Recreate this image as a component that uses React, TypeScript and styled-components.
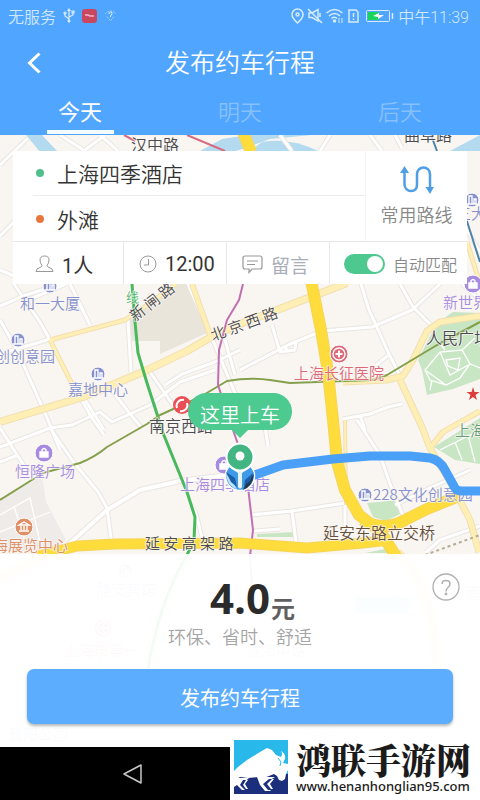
import React, { useState } from "react";
import styled, { createGlobalStyle } from "styled-components";

const GlobalStyle = createGlobalStyle`
  *, *::before, *::after { box-sizing: border-box; }
  body {
    margin: 0;
    background: #fff;
    font-family: Roboto, "Noto Sans CJK SC", sans-serif;
    color: #333;
  }
  button { font: inherit; color: inherit; border: 0; background: none; padding: 0; cursor: pointer; }
`;

const Screen = styled.div`
  display: flex;
  flex-direction: column;
  min-height: 100vh;
  overflow: hidden;
`;

/* ---------- header ---------- */

const Header = styled.header`
  background: #50a5ff;
  color: #fff;
`;

const StatusBar = styled.div`
  display: flex;
  align-items: center;
  justify-content: space-between;
  height: 31px;
  padding: 0 11px 0 8px;
  font-size: 16px;
  font-weight: 350;
  color: #cfe8ff;
`;

const StatusGroup = styled.div<{ $gap: number }>`
  display: flex;
  align-items: center;
  gap: ${(p) => p.$gap}px;
`;

const TitleBar = styled.div`
  display: grid;
  grid-template-columns: 68px 1fr 68px;
  align-items: center;
  height: 63px;
`;

const BackButton = styled.button`
  display: grid;
  place-items: center;
  height: 100%;
`;

const Title = styled.h1`
  margin: 0;
  padding-top: 2px;
  text-align: center;
  font-size: 25px;
  line-height: 32px;
  font-weight: 350;
`;

const Tabs = styled.nav`
  display: grid;
  grid-template-columns: repeat(3, 1fr);
  height: 41px;
`;

const Tab = styled.button<{ $active: boolean }>`
  justify-self: center;
  width: 67px;
  height: 40px;
  padding-top: 2px;
  font-size: 22px;
  line-height: 34px;
  font-weight: ${(p) => (p.$active ? 400 : 350)};
  color: ${(p) => (p.$active ? "#fff" : "#86c0ff")};
  border-bottom: 4px solid ${(p) => (p.$active ? "#f2fbff" : "transparent")};
`;

/* ---------- map ---------- */

const MapArea = styled.main`
  position: relative;
  flex: 1;
  display: flex;
  flex-direction: column;
  justify-content: space-between;
  min-height: 612px;
  overflow: hidden;
  background: #f9f6f2;
`;

const MapCanvas = styled.svg`
  position: absolute;
  inset: 0;
  width: 100%;
  height: 100%;
`;

const MapText = styled.text<{ $size: number }>`
  font-family: "Noto Sans CJK SC", sans-serif;
  font-size: ${(p) => p.$size}px;
  font-weight: 350;
  paint-order: stroke;
  stroke: rgba(251, 248, 245, 0.7);
  stroke-width: 2px;
  stroke-linejoin: round;
`;

const PickupMarker = styled.div`
  position: absolute;
  top: 258px;
  left: 50%;
  transform: translateX(-50%);
  display: flex;
  flex-direction: column;
  align-items: center;
`;

const Bubble = styled.div`
  padding: 0 12px;
  height: 37px;
  border-radius: 19px;
  background: #4dca90;
  color: #fff;
  font-size: 20px;
  line-height: 46px;
  font-weight: 350;
  white-space: nowrap;
`;

/* ---------- trip card ---------- */

const TripCard = styled.section`
  position: relative;
  margin: 16px 13px 0;
  background: #fff;
`;

const TripTop = styled.div`
  display: grid;
  grid-template-columns: 1fr 102px;
  height: 90px;
`;

const Places = styled.div`
  display: grid;
  grid-template-rows: 1fr 1fr;
  padding-left: 20px;
`;

const PlaceButton = styled.button<{ $divided?: boolean }>`
  display: flex;
  align-items: center;
  gap: 13px;
  padding-left: 3px;
  font-size: 21px;
  font-weight: 350;
  text-align: left;
  border-bottom: ${(p) => (p.$divided ? "1px solid #ececec" : "0")};
`;

const Dot = styled.span<{ $color: string }>`
  width: 8px;
  height: 8px;
  border-radius: 50%;
  background: ${(p) => p.$color};
`;

const RoutesButton = styled.button`
  display: flex;
  flex-direction: column;
  align-items: center;
  gap: 9px;
  padding-top: 14px;
  border-left: 1px solid #f4f4f4;
  font-size: 18px;
  line-height: 24px;
  font-weight: 350;
  color: #888;
`;

const Options = styled.div`
  display: grid;
  grid-template-columns: 111fr 103fr 103fr 137fr;
  height: 43px;
  border-top: 1px solid #e8e8e8;
`;

const OptionButton = styled.button<{ $muted?: boolean; $size: number }>`
  display: flex;
  align-items: center;
  gap: 8px;
  padding: 2px 0 0 15px;
  border-right: 1px solid #e8e8e8;
  font-size: ${(p) => p.$size}px;
  color: ${(p) => (p.$muted ? "#aaaeb8" : "#333")};

  &:first-child { padding-left: 22px; }
`;

const SwitchLabel = styled.label`
  display: flex;
  align-items: center;
  justify-content: flex-end;
  gap: 8px;
  padding: 2px 10px 0 0;
  font-size: 16px;
  font-weight: 350;
  color: #888;
  white-space: nowrap;
`;

const SwitchInput = styled.input`
  appearance: none;
  display: flex;
  align-items: center;
  justify-content: flex-start;
  width: 41px;
  height: 20px;
  margin: 0;
  padding: 0 2px;
  border-radius: 10px;
  background: #ccc;

  &::before {
    content: "";
    width: 16px;
    height: 16px;
    border-radius: 50%;
    background: #fff;
  }
  &:checked { background: #4dc88e; justify-content: flex-end; }
`;

/* ---------- price panel ---------- */

const PricePanel = styled.section`
  position: relative;
  display: flex;
  flex-direction: column;
  height: 193px;
  padding: 19px 27px 23px;
  background: rgba(255, 255, 255, 0.94);
`;

const PriceRow = styled.div`
  display: grid;
  grid-template-columns: 1fr auto 1fr;
  align-items: start;
  height: 53px;
  margin: 0 -7px;
`;

const Price = styled.strong`
  grid-column: 2;
  font-family: "Open Sans", "Noto Sans", sans-serif;
  font-size: 42px;
  line-height: 50px;
  font-weight: 700;
  color: #2b2b2b;
`;

const PriceAside = styled.div`
  display: flex;
  justify-content: space-between;
  align-items: flex-start;
`;

const Unit = styled.span`
  padding: 23px 0 0 1px;
  font-family: "Noto Sans CJK SC", sans-serif;
  font-size: 24px;
  line-height: 24px;
  font-weight: 700;
  color: #606060;
`;

const HelpButton = styled.button`
  width: 28px;
  height: 28px;
`;

const Slogan = styled.p`
  margin: 0;
  text-align: center;
  font-size: 18px;
  line-height: 24px;
  font-weight: 350;
  color: #a5a5a5;
`;

const PublishButton = styled.button`
  height: 55px;
  margin-top: auto;
  padding-top: 2px;
  border-radius: 7px;
  background: #5dadff;
  color: #fff;
  font-size: 20px;
  box-shadow: 0 2px 3px rgba(90, 100, 90, 0.45);
`;

/* ---------- bottom bar ---------- */

const NavBar = styled.footer`
  display: flex;
  justify-content: space-between;
  align-items: stretch;
  height: 53px;
  background: #000;
`;

const NavBack = styled.button`
  display: grid;
  place-items: center;
  width: 56px;
  margin-left: 105px;
`;

const SiteBadge = styled.a`
  position: relative;
  display: flex;
  gap: 8px;
  width: 250px;
  height: 65px;
  margin-top: -12px;
  padding: 5px 0 0 4px;
  background: #fff;
  color: #1b1b1b;
  text-decoration: none;
`;

const SiteText = styled.span`
  display: flex;
  flex-direction: column;
  white-space: nowrap;
`;

const SiteName = styled.strong`
  font-family: "Noto Serif CJK SC", "Noto Sans CJK SC", serif;
  font-size: 35px;
  line-height: 38px;
  font-weight: 900;
`;

const SiteUrl = styled.span`
  font-family: "Noto Sans", sans-serif;
  font-size: 13px;
  line-height: 16px;
  font-weight: 500;
`;

/* ---------- map data ---------- */

type Road = { d: string; w?: number };

const minorRoads: Road[] = [
  { d: "M0 165 L28 138 M0 236 L14 222 M0 270 L14 276 M60 135 L85 151 M85 150 L105 135 M100 135 L118 151" },
  { d: "M0 306 L26 295 L60 284" },
  { d: "M14 284 L40 322 L50 340 M28 300 L66 284" },
  { d: "M0 354 L50 339" },
  { d: "M0 320 L16 348 L48 420 L60 450" },
  { d: "M70 284 L90 325 M128 320 L131 372" },
  { d: "M70 380 L92 418 L104 435" },
  { d: "M84 398 L104 430 M110 388 L135 420 L142 428" },
  { d: "M0 447 L50 428 L72 425 L100 412 L112 422 L150 405 L180 382 L215 370" },
  { d: "M150 372 L175 408 M165 385 L182 374 L215 362 L240 350" },
  { d: "M0 428 L14 450 L30 475 M0 462 L18 455" },
  { d: "M50 428 L72 460 L98 492 L107 508 L112 545" },
  { d: "M68 545 L107 510 L140 490 L180 481 L235 474", w: 4 },
  { d: "M195 510 L204 545 M188 284 L214 343 L240 405" },
  { d: "M225 340 L235 375 M240 370 L290 344 L322 331 L372 327 L412 310 L440 284" },
  { d: "M272 325 L280 352 L295 350 L296 340 M285 345 L287 352" },
  { d: "M361 284 L369 310 L376 325 L388 352 L400 376" },
  { d: "M400 284 L413 307 L430 324 M376 365 L390 354" },
  { d: "M343 419 L370 414 L388 407 L402 404 M360 415 L365 430" },
  { d: "M357 420 L380 455 L390 484 L405 520" },
  { d: "M250 515 L292 511 L345 503 M292 511 L296 542 M253 531 L280 529" },
  { d: "M264 420 L268 446 M345 500 L345 540" },
  { d: "M395 505 L430 488 L470 470 M425 553 L440 540 L480 526" },
  { d: "M280 135 L292 151 M330 135 L320 151 M370 135 L382 151 M395 135 L402 148" },
  { d: "M467 230 L480 252 M467 205 L480 195 M462 284 L480 300" },
  { d: "M40 600 L90 640 L110 700 M200 640 L330 620 L420 590 M300 740 L470 680" },
];

const paleRoads: Road[] = [
  { d: "M0 422 L83 397 L143 372 L187 351 L213 336 L240 324 L290 305 L347 283", w: 6 },
  { d: "M50 340 L125 320 L150 303 L176 284", w: 3 },
  { d: "M50 340 L60 360 L72 384", w: 3 },
  { d: "M192 284 L210 335", w: 4 },
  { d: "M480 316 L440 322 L427 331 L413 360 L403 376 L387 380 L343 382", w: 5 },
  { d: "M400 380 L422 427 L430 448 L453 487 L470 520 L479 552", w: 5 },
  { d: "M480 411 L443 432 L430 448", w: 4 },
  { d: "M345 420 L346 505", w: 2 },
  { d: "M0 578 L45 555 M397 553 Q437 590 436 670", w: 8 },
  { d: "M467 242 L480 284", w: 3 },
];

const highways: Road[] = [
  { d: "M243 132 L251 152 M311 280 L321 330 L328 372 L334 430 L337 462 L345 490 L359 515 L380 531 L397 558", w: 10 },
  { d: "M38 556 L77 546 L115 544 L240 543 L307 548 L363 543 L390 540", w: 9 },
  { d: "M362 520 Q385 532 405 520 L427 509 L459 496", w: 10 },
];

type Label = { text: string; x: number; y: number; color: string; size?: number; rotate?: number; end?: boolean };

const INK = "#4a4a50";
const BLUE = "#8791cb";
const PURPLE = "#a68be0";

const labels: Label[] = [
  { text: "汉中路", x: 131, y: 151, color: INK, size: 16 },
  { text: "曲阜路", x: 404, y: 141, color: INK, size: 16 },
  { text: "线", x: 126, y: 302, color: "#4fb86c", size: 13 },
  { text: "新 闸 路", x: 135, y: 322, color: INK, size: 15, rotate: -38 },
  { text: "北 京 西 路", x: 213, y: 341, color: INK, size: 15, rotate: -20 },
  { text: "和一大厦", x: 20, y: 309, color: BLUE },
  { text: "创创意园", x: 55, y: 362, color: BLUE, end: true },
  { text: "嘉地中心", x: 68, y: 395, color: BLUE },
  { text: "南京西路", x: 149, y: 432, color: INK, size: 16 },
  { text: "恒隆广场", x: 15, y: 477, color: PURPLE },
  { text: "上海展览中心", x: 68, y: 551, color: "#dd9068", end: true },
  { text: "上海四季酒店", x: 180, y: 490, color: PURPLE },
  { text: "延 安 高 架 路", x: 145, y: 549, color: INK },
  { text: "上海长征医院", x: 294, y: 379, color: "#df6878" },
  { text: "新世界", x: 443, y: 308, color: PURPLE },
  { text: "人民广场", x: 426, y: 344, color: INK, size: 16 },
  { text: "上海", x: 455, y: 436, color: "#6a9c78" },
  { text: "228文化创意园", x: 373, y: 500, color: BLUE },
  { text: "延安东路立交桥", x: 323, y: 539, color: "#66503c", size: 16 },
  { text: "三大", x: 456, y: 219, color: BLUE },
  { text: "静安宾馆", x: 96, y: 595, color: "#b3b9de" },
  { text: "上海市第一", x: 64, y: 656, color: "#ecabb2" },
  { text: "淮海中路", x: 246, y: 656, color: "#cfc8c8" },
  { text: "南京", x: 466, y: 598, color: "#b3b9de" },
  { text: "襄阳公园", x: 8, y: 740, color: "#b3b9de" },
];

const Roads = ({ items, fill, edge }: { items: Road[]; fill: string; edge: string }) => (
  <g fill="none" strokeLinejoin="round">
    {items.map((r) => <path key={"e" + r.d} d={r.d} stroke={edge} strokeWidth={(r.w ?? 3) + 2} />)}
    {items.map((r) => <path key={r.d} d={r.d} stroke={fill} strokeWidth={r.w ?? 3} />)}
  </g>
);

const Poi = ({ x, y, color, kind }: { x: number; y: number; color: string; kind: "office" | "bag" | "museum" | "cross" }) => (
  <g transform={`translate(${x} ${y})`}>
    <circle r={kind === "office" ? 7 : 9} fill={color} stroke="#fff" />
    <g fill="none" stroke="#fff" strokeWidth="1.4">
      {kind === "office" && <path d="M-3 4V-4H0V4M-5 4H5M2 4V-1H4V4" />}
      {kind === "bag" && <><path d="M-4 -1H4V4H-4Z" fill="#fff" /><path d="M-2 -1V-3Q0 -6 2 -3V-1" /></>}
      {kind === "museum" && <path d="M-5 -2L0 -5L5 -2ZM-3 -1V3M0 -1V3M3 -1V3M-5 4H5" />}
      {kind === "cross" && <><circle r="6" /><path d="M-3.5 0H3.5M0 -3.5V3.5" strokeWidth="2" /></>}
    </g>
  </g>
);

const CityMap = () => (
  <MapCanvas viewBox="0 135 480 612" preserveAspectRatio="xMidYMin slice" aria-label="地图">
    <rect y="135" width="480" height="612" fill="#f9f6f2" />
    <g fill="#b4daf0">
      <path d="M26 135H42L58 152H40Z" />
      <path d="M200 151L222 139L248 135H312L270 139L236 151Z" />
      <path d="M250 151L262 142Q290 137 318 151Z" />
      <path d="M450 151L480 135V151Z" />
    </g>
    <path d="M130 318L176 284H192L207 333L160 354V341H130Z" fill="#e9e5db" />
    <path d="M0 500L42 476L46 502L66 540L50 551H0Z" fill="#efebe8" />
    <g fill="#c8e6c4">
      <path d="M437 323L453 312L480 313V379L453 389L427 395L422 370L418 360L428 340Z" />
      <path d="M434 447L480 418V464L455 460Z" />
      <path d="M367 503L399 500L400 514L386 521L373 517Z" />
      <path d="M257 534L295 532V537H257Z" />
      <path d="M365 553L385 549L400 553Z" />
    </g>
    <g fill="none" stroke="#fff" strokeWidth="1.3">
      <path d="M425 370L440 352L462 350L470 364L460 378L446 385L430 380ZM440 352L450 375L470 364M437 340L445 350M425 370L446 385M446 360L460 358L458 370L448 366ZM430 390L432 380M462 350L475 338M470 364L480 368" />
      <path d="M440 450L480 430M455 442L462 460M468 435L475 462M0 515L30 498L42 551M14 506L28 551M0 532L50 512" />
    </g>
    <Roads items={minorRoads} fill="#ffffff" edge="#e9e5e1" />
    <Roads items={paleRoads} fill="#ffefb4" edge="#f1dfb0" />
    <g fill="none" strokeWidth="3" strokeLinejoin="round">
      <path d="M132 284L135 322L138 353L147 383L158 417L163 433L187 492L195 517L194 540L187 555Q160 600 148 668" stroke="#48b95c" />
      <path d="M0 500L43 473L80 463Q95 457 107 447L147 424L160 415L200 397L227 381Q250 377 270 380L290 383L373 380L387 375L417 357L437 345L480 322" stroke="#85a04c" strokeWidth="2" />
      <path d="M124 135L135 141M187 135L225 151" stroke="#d86a80" strokeWidth="2" />
      <path d="M243 284L239 300L227 320L219 350L218 385L233 430L240 450L248 487L253 530L250 556L252 590" stroke="#c070b0" strokeWidth="2" />
      <path d="M431 135L437 151M465 215L480 262" stroke="#4e83a8" strokeWidth="2" />
      <path d="M425 555L480 535" stroke="#b5aa96" strokeWidth="2" strokeDasharray="3 3" />
    </g>
    <Roads items={highways} fill="#fedc3c" edge="#f6d45a" />
    <Poi x={50} y={286} color={BLUE} kind="office" />
    <Poi x={18} y={340} color={BLUE} kind="office" />
    <Poi x={98} y={374} color={BLUE} kind="office" />
    <Poi x={472} y={200} color={BLUE} kind="office" />
    <Poi x={365} y={495} color={BLUE} kind="office" />
    <Poi x={44} y={453} color={PURPLE} kind="bag" />
    <Poi x={473} y={284} color={PURPLE} kind="bag" />
    <Poi x={224} y={465} color={PURPLE} kind="bag" />
    <Poi x={24} y={527} color="#dd9068" kind="museum" />
    <Poi x={339} y={354} color="#df6878" kind="cross" />
    <Poi x={103} y={628} color="#ecabb2" kind="cross" />
    <Poi x={125} y={571} color="#b3b9de" kind="office" />
    <rect x="355" y="597" width="54" height="16" rx="2" fill="#bfe0ec" />
    <circle cx="182" cy="405" r="9" fill="#e94f55" />
    <path d="M177 408A6 6 0 0 1 184 400M187 403A6 6 0 0 1 180 411" fill="none" stroke="#fff" strokeWidth="2" />
    <path d="M473 387L474.500 392H479.500L475.500 395L477 400L473 397L469 400L470.500 395L466.500 392H471.500Z" fill="#dc3c3c" />
    {labels.map((l) => (
      <MapText
        key={l.text}
        x={l.x}
        y={l.y}
        $size={l.size ?? 15}
        fill={l.color}
        textAnchor={l.end ? "end" : "start"}
        transform={l.rotate ? `rotate(${l.rotate} ${l.x} ${l.y})` : undefined}
      >
        {l.text}
      </MapText>
    ))}
    <path
      d="M240 479L255 475L283 465L333 459L370 456L410 456L430 458Q440 460 445 470L455 488Q457 491 462 491H482"
      fill="none"
      stroke="#4a9ff6"
      strokeWidth="9"
      strokeLinejoin="round"
    />
  </MapCanvas>
);

const PinDrawing = () => (
  <svg width="40" height="62" viewBox="0 0 40 62" aria-hidden="true">
    <path d="M12 0H28L20 8Z" fill="#4dca90" />
    <circle cx="20" cy="46" r="14.500" fill="#3f9be8" stroke="#fff" strokeWidth="1.500" />
    <path d="M6 44Q7 56 17 59.500L12 50Z" fill="#b9e2fb" />
    <path d="M34 44Q33 56 23 60L27 51Z" fill="#26384c" />
    <path d="M6 42L15 48L17 57L11 52ZM34 42L25 50L24 56L30 51Z" fill="#1b5fa8" />
    <path d="M9 37L18 43V57Q20 60 22 57V43L31 37Z" fill="#e9f3f1" />
    <circle cx="20" cy="27" r="13.500" fill="#43b582" stroke="#fff" strokeWidth="2" />
    <circle cx="20" cy="26" r="4.500" fill="#fff" />
  </svg>
);

/* ---------- icons ---------- */

const UsbIcon = () => (
  <svg width="12" height="15" viewBox="0 0 12 15" fill="none" stroke="#d9edff" strokeWidth="1.200">
    <path d="M6 2V13M6 11L2 8V5M6 9L10 7V4" />
    <path d="M4 3L6 0L8 3Z" fill="#d9edff" stroke="none" />
    <circle cx="6" cy="13" r="1.500" fill="#d9edff" stroke="none" />
    <circle cx="2" cy="5" r="1" /><path d="M9 3H11V5H9Z" />
  </svg>
);

const AppBadgeIcon = () => (
  <svg width="15" height="14" viewBox="0 0 15 14">
    <rect width="15" height="14" rx="3" fill="#c94860" />
    <path d="M3 6H6L8 7H12" stroke="#f3b4c2" strokeWidth="1.500" fill="none" />
  </svg>
);

const UnknownWifiIcon = () => (
  <svg width="13" height="12" viewBox="0 0 13 12" fill="none" stroke="#a5d4ff">
    <path d="M1 4Q6.500 -2 12 4M3 6.500L6.500 11L10 6.500" strokeDasharray="2 1" />
    <path d="M5 4Q5 2 6.500 2Q8.500 2 8 4L6.500 6V7" stroke="#e0f0ff" />
  </svg>
);

const StatusIcons = () => (
  <svg width="103" height="16" viewBox="291 7 103 16" fill="none" stroke="#d6ebff" strokeWidth="1.500">
    <path d="M297.500 22Q292 17 292 13.500A5.500 5.500 0 0 1 303 13.500Q303 17 297.500 22Z" />
    <circle cx="297.500" cy="13.500" r="1.500" />
    <path d="M309 12H312L318 8.500V20L312 16.500H309ZM308 8L322 22M320 12V16" />
    <path d="M326.500 12Q334.500 5 342.500 12M329 15Q334.500 10 340 15M331.500 17.500Q334.500 15 337 17.500" />
    <circle cx="334.500" cy="20" r="1" fill="#d6ebff" />
    <path d="M339 17V22M342 17V22" strokeWidth="1" />
    <path d="M349 9H356L358 11V21H349ZM353.500 12V16M353.500 17.500V19" />
    <rect x="366.500" y="9.500" width="23" height="11" rx="1" strokeWidth="1" />
    <path d="M368 11H379V19H368Z" fill="#18d45c" stroke="none" />
    <path d="M373 15L379 12V14H384L378 18V16Z" fill="#fff" stroke="none" />
    <path d="M392.500 12V18" />
  </svg>
);

const RouteIcon = () => (
  <svg width="34" height="30" viewBox="0 0 34 30" fill="none" stroke="#4f9fe6" strokeWidth="2.500">
    <path d="M4.500 7V19.500A6.500 6.500 0 0 0 11 26Q17 26 17 19.500V9A6.500 6.500 0 0 1 30 9V23" />
    <path d="M0 8L4.500 1L9 8ZM25.500 22L30 29L34 22Z" fill="#4f9fe6" stroke="none" />
  </svg>
);

const PersonIcon = () => (
  <svg width="19" height="18" viewBox="0 0 19 18" fill="none" stroke="#999">
    <path d="M7 10.500Q5 8 5 5Q5 1 9.500 1T14 5Q14 8 12 10.500Q12 12 14 12.500Q18 13.500 18 16.500H1Q1 13.500 5 12.500Q7 12 7 10.500Z" />
  </svg>
);

const ClockIcon = () => (
  <svg width="18" height="18" viewBox="0 0 18 18" fill="none" stroke="#999">
    <circle cx="9" cy="9" r="8" />
    <path d="M9.500 4V10H5" />
  </svg>
);

const MessageIcon = () => (
  <svg width="21" height="19" viewBox="0 0 21 19" fill="none" stroke="#999" strokeWidth="1.200">
    <path d="M3 1H18Q20 1 20 3V12Q20 14 18 14H10L7 17.500V14H3Q1 14 1 12V3Q1 1 3 1ZM5 6H16M5 9.500H13" />
  </svg>
);

const HelpIcon = () => (
  <svg width="28" height="28" viewBox="0 0 28 28" fill="none" stroke="#b0b0b0" strokeWidth="1.300">
    <circle cx="14" cy="14" r="13" />
    <path d="M10 11Q10 7.500 14 7.500T18 11Q18 13 16 14.500Q14 16 14 18.500" strokeWidth="1.500" />
    <circle cx="14" cy="21" r="0.800" fill="#b0b0b0" />
  </svg>
);

const BullLogo = () => (
  <svg width="54" height="54" viewBox="0 0 54 54" aria-hidden="true">
    <rect width="54" height="54" fill="#28b8ea" />
    <path d="M0 34H54V54H0Z" fill="#1c2f7c" />
    <path
      d="M0 31L4 27L13 20L26 12L33 8L38 10L42 15L47 17Q49 14 47 11Q52 14 51 19L49 23L54 24V30L52 34L51 39L48 41L45 40L43 36L40 34L35 36L30 38L24 37L14 38L6 37L0 41Z"
      fill="#fff"
    />
    <path d="M2 38H15L8 44L13 50H8L3 45L0 47V39ZM23 37H41L36 40L31 44L37 51H31L26 45Z" fill="#fff" />
    <path d="M9 40H14L9 44L14 50H11L6 45ZM35 39H40L33 44L38 50H34L29 44Z" fill="#1c2f7c" />
    <path d="M12 40H14L11 44L14 49H12L9 45ZM38 39H40L36 44L39 49H37L33 44Z" fill="#fff" />
    <path d="M44 18L47 22L46 26" fill="none" stroke="#28b8ea" />
  </svg>
);

const days = ["今天", "明天", "后天"];

export default function App() {
  const [day, setDay] = useState(0);
  const [autoMatch, setAutoMatch] = useState(true);

  return (
    <Screen>
      <GlobalStyle />
      <Header>
        <StatusBar>
          <StatusGroup $gap={7}>
            <span>无服务</span>
            <UsbIcon />
            <AppBadgeIcon />
            <UnknownWifiIcon />
          </StatusGroup>
          <StatusGroup $gap={4}>
            <StatusIcons />
            <span>中午11:39</span>
          </StatusGroup>
        </StatusBar>
        <TitleBar>
          <BackButton aria-label="返回">
            <svg width="14" height="22" viewBox="0 0 14 22" fill="none" stroke="#fff" strokeWidth="3">
              <path d="M12.500 1.500L2.500 11L12.500 20.500" />
            </svg>
          </BackButton>
          <Title>发布约车行程</Title>
        </TitleBar>
        <Tabs>
          {days.map((name, i) => (
            <Tab key={name} $active={i === day} onClick={() => setDay(i)}>{name}</Tab>
          ))}
        </Tabs>
      </Header>

      <MapArea>
        <CityMap />
        <PickupMarker>
          <Bubble>这里上车</Bubble>
          <PinDrawing />
        </PickupMarker>

        <TripCard>
          <TripTop>
            <Places>
              <PlaceButton $divided><Dot $color="#4fc08d" />上海四季酒店</PlaceButton>
              <PlaceButton><Dot $color="#e8763f" />外滩</PlaceButton>
            </Places>
            <RoutesButton><RouteIcon />常用路线</RoutesButton>
          </TripTop>
          <Options>
            <OptionButton $size={20}><PersonIcon />1人</OptionButton>
            <OptionButton $size={20}><ClockIcon />12:00</OptionButton>
            <OptionButton $size={19} $muted><MessageIcon />留言</OptionButton>
            <SwitchLabel>
              <SwitchInput
                type="checkbox"
                role="switch"
                checked={autoMatch}
                onChange={(e) => setAutoMatch(e.target.checked)}
              />
              自动匹配
            </SwitchLabel>
          </Options>
        </TripCard>

        <PricePanel>
          <PriceRow>
            <Price>4.0</Price>
            <PriceAside>
              <Unit>元</Unit>
              <HelpButton aria-label="价格说明"><HelpIcon /></HelpButton>
            </PriceAside>
          </PriceRow>
          <Slogan>环保、省时、舒适</Slogan>
          <PublishButton>发布约车行程</PublishButton>
        </PricePanel>
      </MapArea>

      <NavBar>
        <NavBack aria-label="后退">
          <svg width="20" height="22" viewBox="0 0 20 22" fill="none" stroke="#c8c8c8" strokeWidth="1.500" strokeLinejoin="round">
            <path d="M18 2V20L1 11Z" />
          </svg>
        </NavBack>
        <SiteBadge href="#">
          <BullLogo />
          <SiteText>
            <SiteName>鸿联手游网</SiteName>
            <SiteUrl>www.henanhonglian95.com</SiteUrl>
          </SiteText>
        </SiteBadge>
      </NavBar>
    </Screen>
  );
}
